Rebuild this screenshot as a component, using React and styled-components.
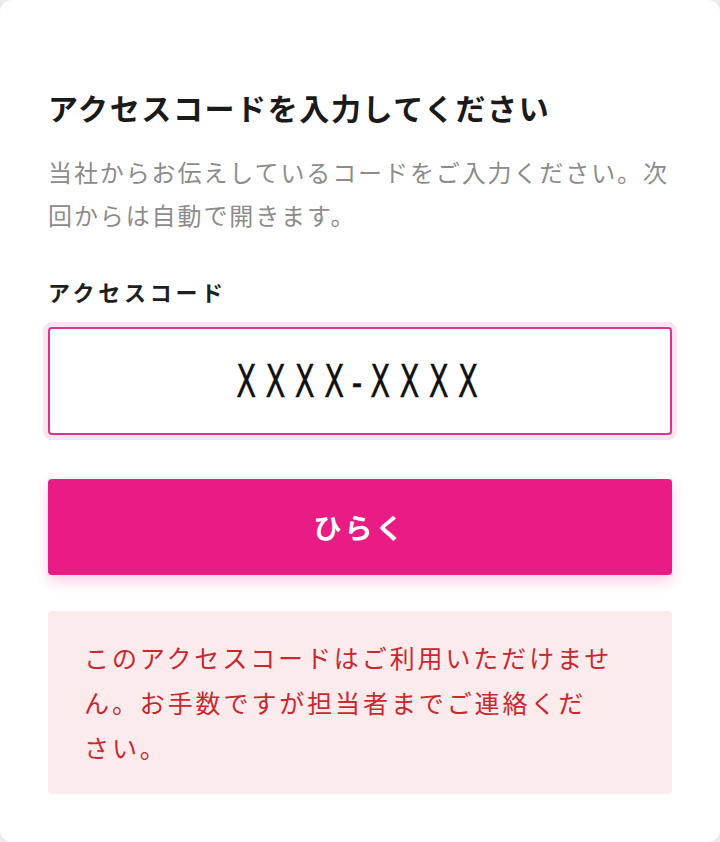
import React, { useState } from 'react';
import styled, { createGlobalStyle } from 'styled-components';

const GlobalStyle = createGlobalStyle`
  html, body {
    margin: 0;
    padding: 0;
    background: #ececec;
  }
  * {
    box-sizing: border-box;
  }
`;

const Card = styled.main`
  min-height: 100vh;
  background: #fff;
  border-radius: 12px;
  padding: 87px 48px 48px;
  font-family: "Noto Sans CJK JP", "Noto Sans", sans-serif;
`;

const Title = styled.h1`
  margin: 0;
  font-size: 30px;
  line-height: 40px;
  font-weight: 700;
  letter-spacing: 1.6px;
  color: #1a1a1a;
`;

const Description = styled.p`
  margin: 23px 0 0;
  font-size: 24px;
  line-height: 43px;
  letter-spacing: 1.9px;
  color: #8c8c8c;
`;

const Label = styled.label`
  display: block;
  margin-top: 40px;
  font-size: 22px;
  line-height: 30px;
  font-weight: 700;
  letter-spacing: 3.7px;
  color: #1f1f1f;
`;

const Field = styled.div`
  position: relative;
  margin-top: 21px;
`;

const CodeInput = styled.input`
  display: block;
  width: 100%;
  height: 108px;
  border: 2px solid #dc3390;
  border-radius: 4px;
  box-shadow: 0 0 0 5px #fde4f1;
  outline: none;
  background: #fff;
  text-align: center;
  font-family: "DejaVu Sans", sans-serif;
  font-size: 40px;
  letter-spacing: 4px;
  color: #111;
`;

const Placeholder = styled.span`
  position: absolute;
  inset: 0;
  display: flex;
  align-items: center;
  justify-content: center;
  pointer-events: none;
  font-family: "DejaVu Sans Condensed", "DejaVu Sans", sans-serif;
  font-stretch: condensed;
  font-size: 45px;
  letter-spacing: 13px;
  padding-left: 5px;
  color: #111;
  -webkit-text-stroke: 0.4px #111;
  transform: scaleX(0.72);
`;

const OpenButton = styled.button`
  display: block;
  width: 100%;
  height: 96px;
  margin-top: 44px;
  border: none;
  border-radius: 4px;
  background: #e91c86;
  color: #fff;
  font-family: "Noto Sans CJK JP", sans-serif;
  font-size: 28px;
  font-weight: 700;
  letter-spacing: 3px;
  box-shadow: 0 6px 14px rgba(233, 28, 134, 0.22);
  cursor: pointer;
`;

const ErrorBox = styled.div`
  margin-top: 36px;
  padding: 24px 36px;
  border-radius: 4px;
  background: #fcebed;
  color: #c8292f;
  font-size: 25px;
  line-height: 45px;
  letter-spacing: 2.9px;
`;

export default function App() {
  const [code, setCode] = useState('');

  return (
    <>
      <GlobalStyle />
      <Card>
        <Title>アクセスコードを入力してください</Title>
        <Description>
          当社からお伝えしているコードをご入力ください。次回からは自動で開きます。
        </Description>
        <Label htmlFor="code">アクセスコード</Label>
        <Field>
          <CodeInput
            id="code"
            value={code}
            onChange={(e) => setCode(e.target.value)}
          />
          {code === '' && <Placeholder>XXXX-XXXX</Placeholder>}
        </Field>
        <OpenButton>ひらく</OpenButton>
        <ErrorBox>
          このアクセスコードはご利用いただけません。お手数ですが担当者までご連絡くだ
          <br />
          さい。
        </ErrorBox>
      </Card>
    </>
  );
}
